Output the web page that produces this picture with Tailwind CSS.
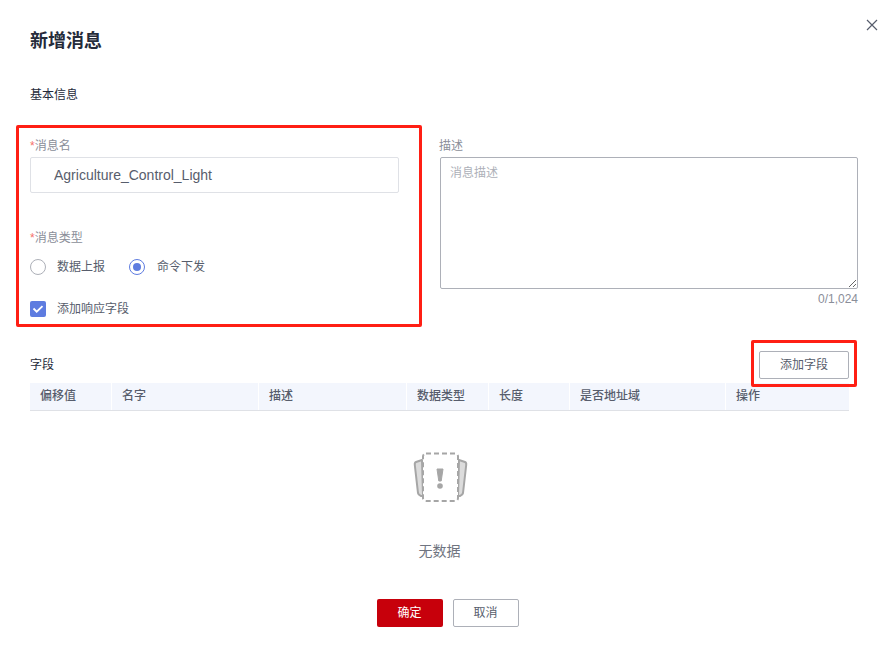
<!DOCTYPE html>
<html lang="zh-CN">
<head>
  <meta charset="UTF-8" />
  <meta name="viewport" content="width=device-width, initial-scale=1.0" />
  <title>新增消息</title>
  <script src="https://cdn.jsdelivr.net/npm/@tailwindcss/browser@4"></script>
</head>
<body class="bg-white font-['Liberation_Sans','Noto_Sans_CJK_SC',sans-serif] text-xs text-[#575d6c]">
  <div class="relative w-[878px] h-[654px] overflow-hidden px-[30px] pt-[28px]">
    <!-- 关闭 -->
    <svg class="absolute left-[866px] top-[19px] w-3 h-3" viewBox="0 0 12 12" fill="none" stroke="#575d6c" stroke-width="1.2"><path d="M1 1l10 10M11 1L1 11" /></svg>

    <h1 class="text-lg leading-[26px] font-bold text-[#252b3a]">新增消息</h1>
    <h2 class="mt-[32px] leading-[18px] text-[#252b3a]">基本信息</h2>

    <div class="mt-[33px] flex items-start">
      <div class="w-[369px] shrink-0">
        <label class="block leading-[18px] mb-[2px] text-[#8a8e99]"><span class="text-[#f66f6a]">*</span>消息名</label>
        <input type="text" value="Agriculture_Control_Light" class="block w-full h-9 border border-[#dfe1e6] rounded-[2px] pl-[23px] text-sm text-[#575d6c] outline-none" />
        <label class="block mt-[36px] leading-[18px] text-[#8a8e99]"><span class="text-[#f66f6a]">*</span>消息类型</label>
        <div class="mt-[11px] h-[18px] flex items-center">
          <span class="w-4 h-4 rounded-full border border-[#adb0b8]"></span>
          <span class="ml-[11px] text-[#575d6c]">数据上报</span>
          <span class="ml-6 w-4 h-4 rounded-full border border-[#5e7ce0] flex items-center justify-center"><span class="w-2 h-2 rounded-full bg-[#5e7ce0]"></span></span>
          <span class="ml-[12px] text-[#575d6c]">命令下发</span>
        </div>
        <div class="mt-[24px] h-[18px] flex items-center">
          <span class="w-4 h-4 rounded-[2px] bg-[#5e7ce0] flex items-center justify-center">
            <svg class="w-3 h-3" viewBox="0 0 12 12" fill="none" stroke="#fff" stroke-width="1.8"><path d="M1.5 5.5l3.2 3.2 5.8-5.6" /></svg>
          </span>
          <span class="ml-[11px] text-[#575d6c]">添加响应字段</span>
        </div>
      </div>
      <div class="ml-[41px] w-[418px] shrink-0">
        <label class="block -ml-[1px] leading-[18px] mb-[2px] text-[#8a8e99]">描述</label>
        <textarea placeholder="消息描述" class="block w-full h-[132px] border border-[#adb0b8] rounded-[2px] px-[9px] py-[6px] text-xs leading-[18px] outline-none placeholder:text-[#adb0b8]"></textarea>
        <div class="mt-[1px] text-right leading-[18px] text-[#8a8e99]">0/1,024</div>
      </div>
    </div>

    <div class="mt-[33px] flex items-center justify-between w-[819px] h-7">
      <span class="-mt-[1px] text-[#252b3a]">字段</span>
      <button class="w-[90px] h-7 border border-[#adb0b8] rounded-[2px] text-[#575d6c]">添加字段</button>
    </div>

    <div class="mt-[4px] w-[819px] h-[28px] grid grid-cols-[81px_146px_147px_81px_80px_155px_1fr] gap-x-[1px] border-b border-[#dfe1e6] text-[#575d6c] font-medium">
      <div class="bg-[#f3f6fd] pl-[10px] leading-[26px]">偏移值</div>
      <div class="bg-[#f3f6fd] pl-[10px] leading-[26px]">名字</div>
      <div class="bg-[#f3f6fd] pl-[10px] leading-[26px]">描述</div>
      <div class="bg-[#f3f6fd] pl-[10px] leading-[26px]">数据类型</div>
      <div class="bg-[#f3f6fd] pl-[10px] leading-[26px]">长度</div>
      <div class="bg-[#f3f6fd] pl-[10px] leading-[26px]">是否地址域</div>
      <div class="bg-[#f3f6fd] pl-[10px] leading-[26px]">操作</div>
    </div>

    <div class="w-[819px] flex flex-col items-center">
      <svg class="mt-[40px] w-[56px] h-[52px]" viewBox="0 0 56 52" fill="none">
        <path d="M10 9 L4 11 Q2.500 11.500 2.800 14 L6 42 Q6.300 44 9 45 L11 45Z" fill="#dcdcdc" stroke="#a6a6a6" stroke-width="2" stroke-linejoin="round" />
        <path d="M47 9 L53 11 Q54.500 11.500 54.200 14 L51 42 Q50.700 44 48 45 L46 45Z" fill="#dcdcdc" stroke="#a6a6a6" stroke-width="2" stroke-linejoin="round" />
        <rect x="11" y="2.500" width="35" height="47.500" rx="3" fill="#fff" stroke="#a6a6a6" stroke-width="2" stroke-dasharray="5 3" />
        <path d="M25 18h6l-1.800 12h-2.400z" fill="#a6a6a6" stroke="#a6a6a6" stroke-linejoin="round" />
        <circle cx="28" cy="35" r="2.800" fill="#a6a6a6" />
      </svg>
      <div class="mt-[39px] text-sm leading-[18px] text-[#6f7480]">无数据</div>
    </div>

    <div class="mt-[39px] w-[835px] flex justify-center gap-[10px]">
      <button class="w-[66px] h-7 rounded-[2px] bg-[#c7000b] text-white">确定</button>
      <button class="w-[66px] h-7 rounded-[2px] border border-[#adb0b8] text-[#575d6c]">取消</button>
    </div>

    <!-- 标注框 -->
    <div class="absolute left-[16px] top-[125px] w-[406px] h-[202px] border-[3px] border-[#ff1f14] rounded-[2px]"></div>
    <div class="absolute left-[751px] top-[340px] w-[106px] h-[47px] border-[3px] border-[#ff1f14] rounded-[2px]"></div>
  </div>
</body>
</html>
